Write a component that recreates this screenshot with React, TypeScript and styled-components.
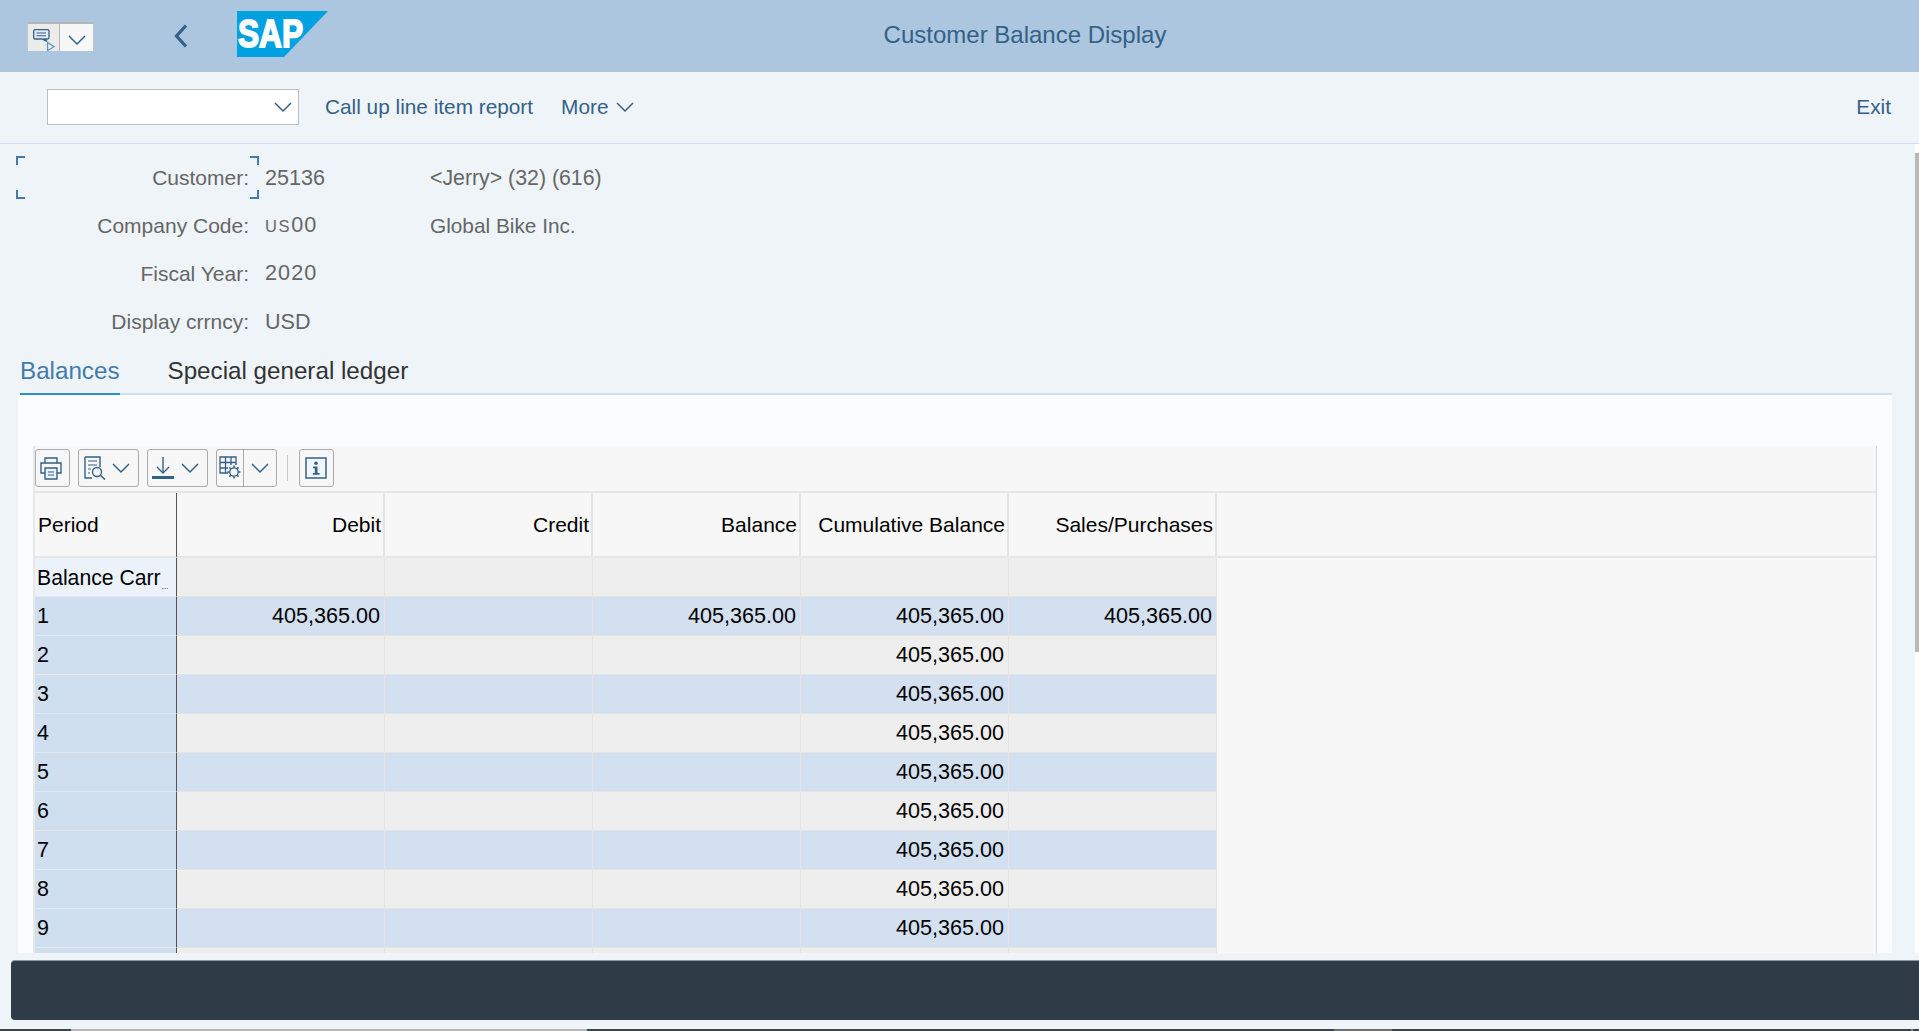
import React from 'react';
import styled, { createGlobalStyle } from 'styled-components';

const GlobalStyle = createGlobalStyle`
  html, body {
    margin: 0;
    padding: 0;
    background: #eff4f8;
    font-family: 'Liberation Sans', Arial, sans-serif;
  }
`;

const Page = styled.div`
  position: relative;
  display: flex;
  flex-direction: column;
  width: 1919px;
  height: 1031px;
  overflow: hidden;
  background: #eff4f8;
`;

const Header = styled.header`
  display: flex;
  align-items: flex-start;
  height: 72px;
  padding-left: 27px;
  background: #abc6de;
  flex-shrink: 0;
`;

const MenuButton = styled.div`
  display: flex;
  height: 29px;
  margin-top: 22px;
  border-top: 2px solid #b4b4b4;
  border-left: 1px solid #c4c4c4;
  border-right: 1px solid #c4c4c4;
  box-sizing: border-box;
  width: 67px;
  border-radius: 2px 2px 0 0;
  overflow: hidden;
`;

const MenuPart = styled.div<{ $active?: boolean }>`
  display: flex;
  justify-content: center;
  width: ${(p) => (p.$active ? '32px' : '33px')};
  padding-top: ${(p) => (p.$active ? '5px' : '11px')};
  box-sizing: border-box;
  background: ${(p) => (p.$active ? '#ececec' : '#f7f7f7')};
  border-right: ${(p) => (p.$active ? '1px solid #b4b4b4' : 'none')};
`;

const BackButton = styled.div`
  width: 14px;
  height: 24px;
  margin: 24px 49px 0 80px;
`;

const Logo = styled.svg`
  display: block;
  margin-top: 11px;
  flex-shrink: 0;
`;

const Title = styled.h1`
  flex: 1;
  margin: 0 197px 0 0;
  line-height: 70px;
  text-align: center;
  font-size: 24px;
  font-weight: 400;
  color: #346187;
`;

const Toolbar = styled.div`
  display: flex;
  align-items: center;
  height: 72px;
  padding: 0 28px 1px 47px;
  box-sizing: border-box;
  border-bottom: 1px solid #d1e0ee;
  flex-shrink: 0;
`;

const Select = styled.div`
  display: flex;
  align-items: center;
  justify-content: flex-end;
  width: 252px;
  height: 36px;
  padding-right: 6px;
  box-sizing: border-box;
  background: #fff;
  border: 1px solid #bfbfbf;
  margin-right: 26px;
`;

const ToolLink = styled.span<{ $push?: boolean }>`
  display: inline-flex;
  align-items: center;
  gap: 8px;
  font-size: 20.8px;
  color: #346187;
  margin-left: ${(p) => (p.$push ? 'auto' : '0')};
  margin-right: ${(p) => (p.$push ? '0' : '28px')};
`;

const Form = styled.section`
  position: relative;
  display: grid;
  grid-template-columns: 249px 181px 1fr;
  grid-auto-rows: 48px;
  padding-top: 10px;
  flex-shrink: 0;
  font-size: 20.8px;
  color: #666;
  align-items: center;
`;

const FormLabel = styled.div`
  font-size: 21px;
  text-align: right;
  white-space: nowrap;
`;

const FormValue = styled.div<{ $nudge?: boolean; $spaced?: boolean }>`
  padding-left: 16px;
  font-size: 21.6px;
  white-space: nowrap;
  letter-spacing: ${(p) => (p.$spaced ? '1.1px' : '0')};
  margin-top: ${(p) => (p.$nudge ? '-2px' : '0')};
`;

const SmallCaps = styled.span`
  font-size: 16.5px;
  letter-spacing: 1.6px;
`;

const FormText = styled.div<{ $wide?: boolean }>`
  white-space: nowrap;
  font-size: ${(p) => (p.$wide ? '21.3px' : '20.8px')};
`;

const FocusFrame = styled.div`
  position: absolute;
  left: 16px;
  top: 12px;
  width: 243px;
  height: 43px;
`;

const Corner = styled.span<{ $v: 'top' | 'bottom'; $h: 'left' | 'right' }>`
  position: absolute;
  width: 9px;
  height: 9px;
  box-sizing: border-box;
  ${(p) => p.$v}: 0;
  ${(p) => p.$h}: 0;
  border-${(p) => p.$v}: 2px solid #427cac;
  border-${(p) => p.$h}: 2px solid #427cac;
`;

const Tabs = styled.nav`
  display: flex;
  height: 49px;
  margin: 0 27px 0 20px;
  box-sizing: border-box;
  border-bottom: 2px solid #d1e0ee;
  flex-shrink: 0;
`;

const Tab = styled.div<{ $active?: boolean }>`
  height: 49px;
  box-sizing: border-box;
  line-height: 50px;
  font-size: 24.2px;
  white-space: nowrap;
  margin-right: 48px;
  color: ${(p) => (p.$active ? '#427cac' : '#333')};
  border-bottom: 2px solid ${(p) => (p.$active ? '#2a8fcf' : 'transparent')};
`;

const Panel = styled.main`
  height: 558px;
  margin: 0 27px 0 18px;
  padding: 51px 15px 0;
  box-sizing: border-box;
  background: #fbfcfd;
  overflow: hidden;
  flex-shrink: 0;
`;

const GridBox = styled.div`
  height: 507px;
  overflow: hidden;
  background: #f7f7f7;
  border-left: 2px solid #e8e8e8;
  border-right: 1px solid #d8d8d8;
`;

const GridTools = styled.div`
  display: flex;
  align-items: center;
  height: 47px;
  padding-bottom: 1px;
  box-sizing: border-box;
  border-bottom: 2px solid #e6e6e6;
`;

const ToolButton = styled.div<{ $w: number; $gap?: number }>`
  display: flex;
  align-items: center;
  width: ${(p) => p.$w}px;
  height: 38px;
  margin-right: ${(p) => p.$gap ?? 8}px;
  box-sizing: border-box;
  border: 1.5px solid #ababab;
  border-radius: 3px;
`;

const ToolDivider = styled.span`
  align-self: stretch;
  width: 1px;
  background: #ababab;
`;

const IconSlot = styled.span<{ $w: number }>`
  display: flex;
  align-items: center;
  justify-content: center;
  width: ${(p) => p.$w}px;
`;

const ToolSeparator = styled.span`
  width: 1px;
  height: 26px;
  margin-right: 11px;
  background: #c9c9c9;
`;

const Row = styled.div`
  display: grid;
  grid-template-columns: 142px repeat(5, 208px) 1fr;
`;

const HeadCell = styled.div<{ $left?: boolean; $fill?: boolean }>`
  height: 65px;
  box-sizing: border-box;
  padding: ${(p) => (p.$left ? '0 0 0 3px' : '0 2px 0 0')};
  line-height: 63px;
  font-size: 21px;
  color: #000;
  white-space: nowrap;
  text-align: ${(p) => (p.$left ? 'left' : 'right')};
  border-bottom: 2px solid #e6e6e6;
  border-right: ${(p) => (p.$fill ? 'none' : p.$left ? '1px solid #555' : '2px solid #e4e4e4')};
`;

const Cell = styled.div<{ $tone: 'blue' | 'grey' }>`
  height: 39px;
  box-sizing: border-box;
  padding-right: 4px;
  line-height: 38px;
  font-size: 21.6px;
  color: #000;
  text-align: right;
  white-space: nowrap;
  background: ${(p) => (p.$tone === 'blue' ? '#d3e0f0' : '#eeeeee')};
  border-bottom: 1px solid #e4e4e4;
  border-right: 1px solid #e4e4e4;
`;

const PeriodCell = styled.div<{ $carry?: boolean }>`
  height: 39px;
  box-sizing: border-box;
  padding-left: 2px;
  line-height: ${(p) => (p.$carry ? '40px' : '39px')};
  font-size: ${(p) => (p.$carry ? '21.2px' : '21.4px')};
  color: #000;
  white-space: nowrap;
  background: ${(p) => (p.$carry ? '#ebf2fa' : '#cfdfef')};
  border-bottom: 1px solid #e2e8ef;
  border-right: 1px solid #555;
`;

const Dots = styled.span`
  position: relative;
  top: 4px;
  margin-left: 1px;
  font-size: 8px;
`;

const Footer = styled.footer`
  height: 60px;
  margin: 7px 0 0 11px;
  box-sizing: border-box;
  background: #2f3c48;
  border-top: 1px solid #8a9aa5;
  border-radius: 4px 0 0 4px;
  flex-shrink: 0;
`;

const TaskStrip = styled.div`
  display: flex;
  height: 2px;
  margin-top: 9px;
  flex-shrink: 0;
`;

const StripPiece = styled.span<{ $w: number; $c: string }>`
  display: block;
  width: ${(p) => p.$w}px;
  background: ${(p) => p.$c};
`;

const ScrollTrack = styled.div`
  position: absolute;
  right: 0;
  top: 144px;
  width: 4px;
  height: 809px;
  background: #fff;
`;

const ScrollThumb = styled.div`
  margin-top: 9px;
  height: 499px;
  background: #b9b9b9;
`;

const Chevron = ({ w = 18, h = 9 }: { w?: number; h?: number }) => (
  <svg width={w} height={h + 2} viewBox={`0 0 ${w} ${h + 2}`} fill="none">
    <path d={`M1 1 L${w / 2} ${h} L${w - 1} 1`} stroke="#346187" strokeWidth="1.5" />
  </svg>
);

const BubbleIcon = () => (
  <svg width="22" height="22" viewBox="0 0 22 22" fill="none">
    <path d="M2 0.7H14.5Q16 0.7 16 2.2V8.5Q16 10 14.5 10H11.5L14 12.5L9 10H2Q0.7 10 0.7 8.5V2.2Q0.7 0.7 2 0.7Z" stroke="#346187" strokeWidth="1.3" fill="#e3ecf4" />
    <path d="M3.5 4H13M3.5 6.8H13" stroke="#346187" strokeWidth="1.1" />
    <path d="M14.6 13.5L21 17.7L14.6 21.5Z" stroke="#5d93c2" strokeWidth="1.3" fill="#f2f6fa" />
  </svg>
);

const BackIcon = () => (
  <svg width="14" height="24" viewBox="0 0 14 24" fill="none">
    <path d="M12 1.5L2.5 12L12 22.5" stroke="#346187" strokeWidth="3.2" />
  </svg>
);

const SapLogo = () => (
  <Logo width="91" height="46" viewBox="0 0 91 46">
    <polygon points="0,0 91,0 47,46 0,46" fill="#00a1e0" />
    <text
      x="1"
      y="36"
      fontFamily="'Liberation Sans', Arial, sans-serif"
      fontWeight="700"
      fontSize="38"
      fill="#fff"
      stroke="#fff"
      strokeWidth="1.8"
      textLength="65"
      lengthAdjust="spacingAndGlyphs"
    >
      SAP
    </text>
  </Logo>
);

const PrintIcon = () => (
  <svg width="24" height="24" viewBox="0 0 24 24" fill="none" stroke="#346187" strokeWidth="1.4">
    <path d="M6 7V2H18V7" />
    <path d="M6 17H2V7H22V17H18" />
    <path d="M6 12H18V23H6Z" fill="#eaf1f8" />
    <path d="M9 16H15M9 19H15" strokeWidth="1.2" />
  </svg>
);

const PreviewIcon = () => (
  <svg width="24" height="24" viewBox="0 0 24 24" fill="none" stroke="#346187" strokeWidth="1.4">
    <path d="M2 1H17V11M9 22H2V1" />
    <path d="M5 5H14M5 9H14M5 13H8M5 17H7" strokeWidth="1.2" />
    <circle cx="14" cy="16" r="4.5" />
    <path d="M17.5 19.5L22 23.5" strokeWidth="1.6" />
  </svg>
);

const DownloadIcon = () => (
  <svg width="24" height="24" viewBox="0 0 24 24" fill="none" stroke="#346187">
    <path d="M12 1V17" strokeWidth="1.4" />
    <path d="M6 11L12 17L18 11" strokeWidth="1.4" />
    <path d="M1 21.5H23" strokeWidth="3" />
  </svg>
);

const TableGearIcon = () => (
  <svg width="24" height="24" viewBox="0 0 24 24" fill="none" stroke="#346187" strokeWidth="1.3">
    <path d="M10 17H2V1H18V9M2 6.5H18M2 12H10M7.5 1V17M13 1V9" />
    <circle cx="16" cy="16" r="4.2" />
    <path d="M16 9.5V11.5M16 20.5V22.5M9.5 16H11.5M20.5 16H22.5M11.4 11.4L12.8 12.8M19.2 19.2L20.6 20.6M11.4 20.6L12.8 19.2M19.2 12.8L20.6 11.4" strokeWidth="1.6" />
  </svg>
);

const InfoIcon = () => (
  <svg width="22" height="24" viewBox="0 0 22 24" fill="none">
    <rect x="1" y="2" width="20" height="20" stroke="#346187" strokeWidth="1.5" fill="#f2f6fa" />
    <circle cx="11" cy="7.3" r="1.8" fill="#346187" />
    <path d="M8 10.5H12.5V17H14.5V18.8H7.8V17H9.8V12.3H8Z" fill="#346187" />
  </svg>
);

const formRows = [
  { label: 'Customer:', value: <>25136</>, text: '<Jerry> (32) (616)', wide: true },
  { label: 'Company Code:', value: <><SmallCaps>US</SmallCaps>00</>, text: 'Global Bike Inc.', nudge: true, spaced: true },
  { label: 'Fiscal Year:', value: <>2020</>, text: '', nudge: true, spaced: true },
  { label: 'Display crrncy:', value: <>USD</>, text: '' },
];

const columns = ['Debit', 'Credit', 'Balance', 'Cumulative Balance', 'Sales/Purchases'];
const amount = '405,365.00';

const periods = ['1', '2', '3', '4', '5', '6', '7', '8', '9', ''];

const App: React.FC = () => {
  return (
    <Page>
      <GlobalStyle />
      <Header>
        <MenuButton>
          <MenuPart $active>
            <BubbleIcon />
          </MenuPart>
          <MenuPart>
            <Chevron />
          </MenuPart>
        </MenuButton>
        <BackButton>
          <BackIcon />
        </BackButton>
        <SapLogo />
        <Title>Customer Balance Display</Title>
      </Header>

      <Toolbar>
        <Select>
          <Chevron />
        </Select>
        <ToolLink>Call up line item report</ToolLink>
        <ToolLink>
          More
          <Chevron />
        </ToolLink>
        <ToolLink $push>Exit</ToolLink>
      </Toolbar>

      <Form>
        <FocusFrame>
          <Corner $v="top" $h="left" />
          <Corner $v="top" $h="right" />
          <Corner $v="bottom" $h="left" />
          <Corner $v="bottom" $h="right" />
        </FocusFrame>
        {formRows.map((row) => (
          <React.Fragment key={row.label}>
            <FormLabel>{row.label}</FormLabel>
            <FormValue $nudge={row.nudge} $spaced={row.spaced}>{row.value}</FormValue>
            <FormText $wide={row.wide}>{row.text}</FormText>
          </React.Fragment>
        ))}
      </Form>

      <Tabs>
        <Tab $active>Balances</Tab>
        <Tab>Special general ledger</Tab>
      </Tabs>

      <Panel>
        <GridBox>
          <GridTools>
            <ToolButton $w={35}>
              <IconSlot $w={30}><PrintIcon /></IconSlot>
            </ToolButton>
            <ToolButton $w={61}>
              <IconSlot $w={32}><PreviewIcon /></IconSlot>
              <IconSlot $w={20}><Chevron /></IconSlot>
            </ToolButton>
            <ToolButton $w={61}>
              <IconSlot $w={30}><DownloadIcon /></IconSlot>
              <IconSlot $w={24}><Chevron /></IconSlot>
            </ToolButton>
            <ToolButton $w={61} $gap={10}>
              <IconSlot $w={26}><TableGearIcon /></IconSlot>
              <ToolDivider />
              <IconSlot $w={32}><Chevron /></IconSlot>
            </ToolButton>
            <ToolSeparator />
            <ToolButton $w={35}>
              <IconSlot $w={31}><InfoIcon /></IconSlot>
            </ToolButton>
          </GridTools>

          <Row>
            <HeadCell $left>Period</HeadCell>
            {columns.map((c) => (
              <HeadCell key={c}>{c}</HeadCell>
            ))}
            <HeadCell $fill />
          </Row>

          <Row>
            <PeriodCell $carry>
              Balance Carr<Dots>...</Dots>
            </PeriodCell>
            {columns.map((c) => (
              <Cell key={c} $tone="grey" />
            ))}
          </Row>

          {periods.map((period, i) => {
            const tone = i % 2 === 0 ? 'blue' : 'grey';
            return (
              <Row key={i}>
                <PeriodCell>{period}</PeriodCell>
                <Cell $tone={tone}>{i === 0 ? amount : ''}</Cell>
                <Cell $tone={tone} />
                <Cell $tone={tone}>{i === 0 ? amount : ''}</Cell>
                <Cell $tone={tone}>{i < 9 ? amount : ''}</Cell>
                <Cell $tone={tone}>{i === 0 ? amount : ''}</Cell>
              </Row>
            );
          })}
        </GridBox>
      </Panel>

      <Footer />

      <TaskStrip>
        <StripPiece $w={71} $c="#3d4349" />
        <StripPiece $w={516} $c="#b9b9b9" />
        <StripPiece $w={747} $c="#3d4349" />
        <StripPiece $w={58} $c="#6f6f6f" />
        <StripPiece $w={519} $c="#3d4349" />
        <StripPiece $w={2} $c="#8a8a8a" />
        <StripPiece $w={6} $c="#3d4349" />
      </TaskStrip>

      <ScrollTrack>
        <ScrollThumb />
      </ScrollTrack>
    </Page>
  );
};

export default App;
